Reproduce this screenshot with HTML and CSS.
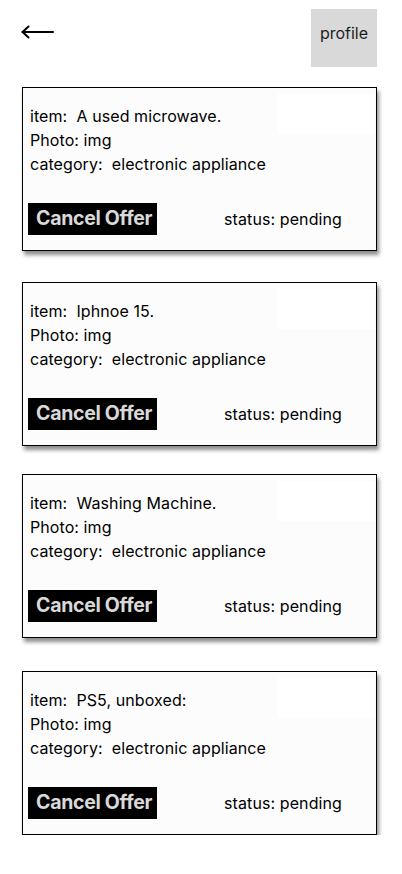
FILE: index.html
```
<!DOCTYPE html>
<html lang="en">
<head>
<meta charset="utf-8">
<title>My offers</title>
<link rel="stylesheet" href="styles.css">
</head>
<body>
<header class="topbar">
  <button class="back" aria-label="Back">
    <svg width="33" height="16" viewBox="0 0 33 16" fill="none" stroke="#000" stroke-width="2" stroke-linecap="round" stroke-linejoin="round">
      <path d="M1.5 8H32"/>
      <path d="M7.5 2.5L1.5 8L7.5 13.5"/>
    </svg>
  </button>
  <div class="profile">profile</div>
</header>
<main class="list">
  <section class="card c1">
    <div class="info">
      <p class="line">item:  A used microwave.</p>
      <p class="line">Photo: img</p>
      <p class="line">category:  electronic appliance</p>
    </div>
    <div class="actions">
      <button class="cancel">Cancel Offer</button>
      <span class="status">status: pending</span>
    </div>
  </section>
  <section class="card c2">
    <div class="info">
      <p class="line">item:  Iphnoe 15.</p>
      <p class="line">Photo: img</p>
      <p class="line">category:  electronic appliance</p>
    </div>
    <div class="actions">
      <button class="cancel">Cancel Offer</button>
      <span class="status">status: pending</span>
    </div>
  </section>
  <section class="card c3">
    <div class="info">
      <p class="line">item:  Washing Machine.</p>
      <p class="line">Photo: img</p>
      <p class="line">category:  electronic appliance</p>
    </div>
    <div class="actions">
      <button class="cancel">Cancel Offer</button>
      <span class="status">status: pending</span>
    </div>
  </section>
  <section class="card c4">
    <div class="info">
      <p class="line">item:  PS5, unboxed:</p>
      <p class="line">Photo: img</p>
      <p class="line">category:  electronic appliance</p>
    </div>
    <div class="actions">
      <button class="cancel">Cancel Offer</button>
      <span class="status">status: pending</span>
    </div>
  </section>
</main>
</body>
</html>
```
FILE: styles.css
```
* { box-sizing: border-box; }
html, body { margin: 0; padding: 0; background: #fff; }
body {
  font-family: Inter, "Noto Sans", sans-serif;
  color: #000;
  width: 402px;
}
.topbar {
  display: flex;
  justify-content: space-between;
  align-items: flex-start;
  padding: 9px 25px 0 21px;
}
.back {
  margin-top: 15px;
  padding: 0;
  border: 0;
  background: none;
  display: block;
  width: 33px;
  height: 16px;
}
.back svg { display: block; }
.profile {
  width: 66px;
  height: 58px;
  background: #d9d9d9;
  display: flex;
  align-items: center;
  justify-content: center;
  font-size: 16px;
  color: #1e1e1e;
  padding-bottom: 10px;
}
.list {
  display: flex;
  flex-direction: column;
  padding: 20px 25px 0 22px;
}
.card {
  position: relative;
  height: 164px;
  border: 1px solid #000;
  background: #fcfcfc;
  box-shadow: 2px 4px 4px rgba(0,0,0,0.45);
  padding: 16px 0 0 0;
}
.card::after {
  content: "";
  position: absolute;
  top: 6px;
  right: 1px;
  width: 98px;
  height: 40px;
  background: #fff;
}
.c2 { margin-top: 31px; }
.c3 { margin-top: 28px; }
.c4 { margin-top: 33px; }
.info { position: relative; z-index: 1; padding-left: 7px; }
.line {
  margin: 0;
  font-size: 16px;
  line-height: 24px;
  white-space: pre;
  letter-spacing: 0.08px;
}
.actions {
  display: flex;
  align-items: center;
  margin-top: 27px;
  padding-left: 5px;
}
.cancel {
  height: 32px;
  width: 129px;
  border: 0;
  background: #000;
  color: #d9d9d9;
  font-family: Inter, "Noto Sans", sans-serif;
  font-weight: 700;
  font-size: 19.5px;
  padding: 0 0 3px 8px;
  text-align: left;
  letter-spacing: -0.3px;
}
.status {
  margin-left: 67px;
  font-size: 16px;
  letter-spacing: 0.1px;
}
```
